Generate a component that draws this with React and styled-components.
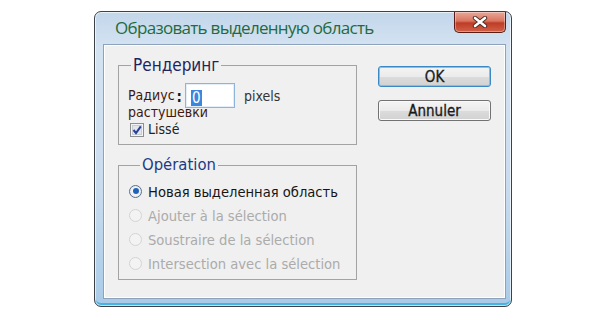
import React from "react";
import styled, { createGlobalStyle } from "styled-components";

const GlobalStyle = createGlobalStyle`
  body {
    margin: 0;
    background: #ffffff;
    font-family: "DejaVu Sans Condensed", "Liberation Sans", sans-serif;
  }
`;

const Page = styled.div`
  padding: 11px 0 0 94px;
`;

const Window = styled.div`
  box-sizing: border-box;
  width: 418px;
  height: 296px;
  display: flex;
  flex-direction: column;
  padding: 0 5px 7px 8px;
  border: 1px solid #3d4248;
  border-radius: 7px;
  background: linear-gradient(180deg, #c2d6ea 0%, #d4e3f2 12%, #c9dcee 60%, #a9cbe8 100%);
  box-shadow: inset 0 0 0 1px rgba(255, 255, 255, 0.65), inset 0 -3px 0 #45b4e3;
`;

const TitleBar = styled.div`
  height: 32px;
  display: flex;
  justify-content: space-between;
  align-items: flex-start;
`;

const Title = styled.div`
  padding: 7px 0 0 12px;
  font-family: "Open Sans", "Liberation Sans", sans-serif;
  font-size: 17px;
  letter-spacing: -0.7px;
  line-height: 1.1;
  color: #1f6b3e;
`;

const CloseButton = styled.div`
  width: 50px;
  height: 20px;
  display: flex;
  align-items: center;
  justify-content: center;
  border: 1px solid #5a1c14;
  border-top: none;
  border-radius: 0 0 5px 5px;
  background: linear-gradient(180deg, #e9a898 0%, #d97560 45%, #bf3b24 55%, #d0624a 100%);
  box-shadow: inset 0 0 0 1px rgba(255, 255, 255, 0.35);
`;

const Client = styled.div`
  flex: 1;
  display: flex;
  padding: 10px 0 0 14px;
  background: #f0f0f0;
  border: 1px solid #8da3bb;
  box-shadow: inset 0 0 0 1px #ffffff;
`;

const LeftColumn = styled.div`
  width: 239px;
  display: flex;
  flex-direction: column;
  gap: 11px;
`;

const Group = styled.fieldset`
  margin: 0;
  padding: ${(p) => p.$pad};
  min-width: 0;
  border: 1px solid #a3a3a3;
  border-radius: 0;
`;

const Legend = styled.legend`
  margin-left: ${(p) => p.$offset}px;
  padding: 0 2px;
  font-size: ${(p) => p.$size}px;
  line-height: ${(p) => p.$lh}px;
  color: ${(p) => p.$color};
`;

const FieldRow = styled.div`
  display: flex;
  align-items: center;
  height: 25px;
`;

const Label = styled.span`
  font-size: 14px;
  line-height: 17px;
  color: #3e1810;
`;

const Colon = styled.span`
  margin: 4px 0 0 2px;
  font-size: 15px;
  line-height: 15px;
  font-weight: 700;
  color: #1a1a1a;
`;

const Input = styled.div`
  box-sizing: border-box;
  width: 50px;
  height: 25px;
  margin-left: 3px;
  padding: 4px 0 0 5px;
  background: #ffffff;
  border: 1px solid #8fb4dc;
  box-shadow: inset 0 0 0 1px #e3eef9;
`;

const Selected = styled.span`
  display: inline-block;
  padding: 0 1px;
  font-size: 15px;
  line-height: 16px;
  color: #ffffff;
  background: #3a86e0;
`;

const Unit = styled.span`
  margin-left: 9px;
  font-size: 14px;
  color: #333333;
`;

const WrappedLabel = styled(Label)`
  display: block;
  line-height: 9px;
`;

const CheckRow = styled.label`
  display: flex;
  align-items: center;
  gap: 4px;
  margin: 4px 0 0 2px;
  font-size: 14px;
  line-height: 17px;
  color: #222222;
`;

const RadioRow = styled.div`
  display: flex;
  align-items: center;
  gap: 6px;
  height: 24px;
  font-size: 14.6px;
  white-space: nowrap;
  color: ${(p) => (p.$disabled ? "#ababab" : "#151515")};
`;

const Radio = styled.span`
  box-sizing: border-box;
  flex: none;
  width: 13px;
  height: 13px;
  border-radius: 50%;
  display: flex;
  align-items: center;
  justify-content: center;
  border: 1px solid ${(p) => (p.$disabled ? "#d4d4d4" : "#5a6f86")};
  background: ${(p) => (p.$disabled ? "#f3f3f3" : "radial-gradient(circle, #ffffff 0%, #dfe6ee 100%)")};

  &::after {
    content: "";
    width: 6px;
    height: 6px;
    border-radius: 50%;
    background: #1f63b8;
    display: ${(p) => (p.$checked ? "block" : "none")};
  }
`;

const ButtonColumn = styled.div`
  display: flex;
  flex-direction: column;
  gap: 13px;
  padding: 11px 0 0 21px;
`;

const Button = styled.div`
  box-sizing: border-box;
  width: 113px;
  height: 21px;
  display: flex;
  align-items: center;
  justify-content: center;
  font-size: 15px;
  color: #1a1a1a;
  -webkit-text-stroke: 0.3px #1a1a1a;
  border: 1px solid ${(p) => (p.$primary ? "#3b88c4" : "#727272")};
  border-radius: 3px;
  background: linear-gradient(180deg, #f4f4f4 0%, #ebebeb 50%, #dcdcdc 51%, #d2d2d2 100%);
  box-shadow: ${(p) => (p.$primary ? "inset 0 0 0 1px #74c8f0" : "inset 0 0 0 1px #fafafa")};
`;

const CheckIcon = () => (
  <svg width="14" height="14" viewBox="0 0 14 14">
    <rect x="0.5" y="0.5" width="13" height="13" fill="#f4f4f4" stroke="#8e8f8f" />
    <rect x="2.5" y="2.5" width="9" height="9" fill="#e2e6ea" stroke="#c8ccd0" />
    <path d="M3.5 7 L6 10 L10.8 3.4" fill="none" stroke="#2a3f9a" strokeWidth="2" />
  </svg>
);

const CloseIcon = () => (
  <svg width="16" height="12" viewBox="0 0 16 12">
    <path d="M3 2 L13 10 M13 2 L3 10" stroke="#4a2a25" strokeWidth="4.4" strokeLinecap="round" />
    <path d="M3 2 L13 10 M13 2 L3 10" stroke="#ffffff" strokeWidth="2.6" strokeLinecap="round" />
  </svg>
);

const options = [
  { text: "Новая выделенная область", checked: true },
  { text: "Ajouter à la sélection", disabled: true },
  { text: "Soustraire de la sélection", disabled: true },
  { text: "Intersection avec la sélection", disabled: true },
];

export default function App() {
  return (
    <Page>
      <GlobalStyle />
      <Window>
        <TitleBar>
          <Title>Образовать выделенную область</Title>
          <CloseButton>
            <CloseIcon />
          </CloseButton>
        </TitleBar>
        <Client>
          <LeftColumn>
            <Group $pad="8px 9px 6px 9px">
              <Legend $offset={3} $size={17} $lh={20} $color="#1c2560">
                Рендеринг
              </Legend>
              <FieldRow>
                <Label>Радиус</Label>
                <Colon>:</Colon>
                <Input>
                  <Selected>0</Selected>
                </Input>
                <Unit>pixels</Unit>
              </FieldRow>
              <WrappedLabel>растушевки</WrappedLabel>
              <CheckRow>
                <CheckIcon />
                Lissé
              </CheckRow>
            </Group>
            <Group $pad="5px 9px 4px 10px">
              <Legend $offset={11} $size={16.5} $lh={18} $color="#1d3a86">
                Opération
              </Legend>
              {options.map((o) => (
                <RadioRow key={o.text} $disabled={o.disabled}>
                  <Radio $checked={o.checked} $disabled={o.disabled} />
                  {o.text}
                </RadioRow>
              ))}
            </Group>
          </LeftColumn>
          <ButtonColumn>
            <Button $primary>OK</Button>
            <Button>Annuler</Button>
          </ButtonColumn>
        </Client>
      </Window>
    </Page>
  );
}
